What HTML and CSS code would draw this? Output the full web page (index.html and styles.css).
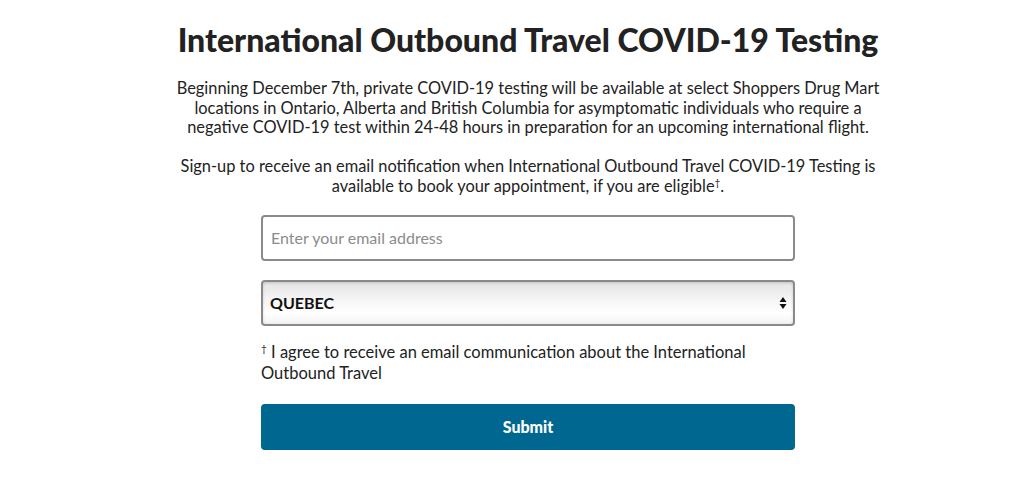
FILE: index.html
```html
<!DOCTYPE html>
<html lang="en">
<head>
    <meta charset="UTF-8">
    <title>International Outbound Travel COVID-19 Testing</title>
    <link rel="stylesheet" href="styles.css">
</head>
<body>

    <div class="page">
        <h1>International Outbound Travel COVID-19 Testing</h1>
        <p class="intro">Beginning December 7th, private COVID-19 testing will be available at select Shoppers Drug Mart locations in Ontario, Alberta and British Columbia for asymptomatic individuals who require a negative COVID-19 test within 24-48 hours in preparation for an upcoming international flight.</p>
        <p class="intro">Sign-up to receive an email notification when International Outbound Travel COVID-19 Testing is available to book your appointment, if you are eligible<sup>&dagger;</sup>.</p>

        <form class="signup">
            <input type="email" class="field" placeholder="Enter your email address">
            <div class="select-wrap">
                <select class="field province">
                    <option>QUEBEC</option>
                    <option>ONTARIO</option>
                    <option>ALBERTA</option>
                    <option>BRITISH COLUMBIA</option>
                </select>
                <svg class="arrows" width="8" height="14" viewBox="0 0 8 14">
                    <path d="M4 1 L7.5 6 L0.5 6 Z M4 13 L7.5 8 L0.5 8 Z" fill="#111"/>
                </svg>
            </div>
            <p class="agree"><sup>&dagger;</sup> I agree to receive an email communication about the International Outbound Travel</p>
            <button type="button" class="submit">Submit</button>
        </form>
    </div>

</body>
</html>
```

FILE: styles.css
```css
body {
    margin: 0;
    font-family: 'Lato', 'Liberation Sans', sans-serif;
    color: #222;
    background: #fff;
}

.page {
    display: flex;
    flex-direction: column;
    align-items: center;
    padding-left: 32px;
}

h1 {
    font-size: 32px;
    font-weight: 900;
    margin: 20px 0 18px;
    line-height: 40px;
    color: #222;
}

.intro {
    width: 714px;
    margin: 0 0 19.5px;
    font-size: 16.4px;
    line-height: 19.5px;
    text-align: center;
}

.intro sup {
    font-size: 10px;
    line-height: 0;
    vertical-align: 6px;
}

.signup {
    width: 534px;
    display: flex;
    flex-direction: column;
}

.field {
    box-sizing: border-box;
    width: 100%;
    height: 46px;
    border: 2px solid #8a8a8a;
    border-radius: 4px;
    padding: 0 8px;
    font-family: inherit;
    font-size: 16px;
    color: #111;
    background: #fff;
}

.field::placeholder {
    color: #8c8c8c;
}

.select-wrap {
    position: relative;
    margin-top: 19px;
}

.province {
    appearance: none;
    -webkit-appearance: none;
    font-weight: 700;
    padding-left: 7px;
    background: linear-gradient(#e4e4e4, #f6f6f6 45%, #ffffff 75%, #f2f2f2);
    box-shadow: inset 0 1px 3px rgba(0, 0, 0, 0.15);
}

.arrows {
    position: absolute;
    right: 8px;
    top: 16px;
    pointer-events: none;
}

.agree {
    margin: 16px 0 0;
    padding-right: 30px;
    font-size: 16.5px;
    line-height: 21px;
}

.agree sup {
    font-size: 10px;
    line-height: 0;
    vertical-align: 6px;
}

.submit {
    margin-top: 20px;
    height: 46px;
    border: none;
    border-radius: 4px;
    background: #006890;
    color: #fff;
    font-family: inherit;
    font-size: 16px;
    font-weight: 900;
    cursor: pointer;
}
```
